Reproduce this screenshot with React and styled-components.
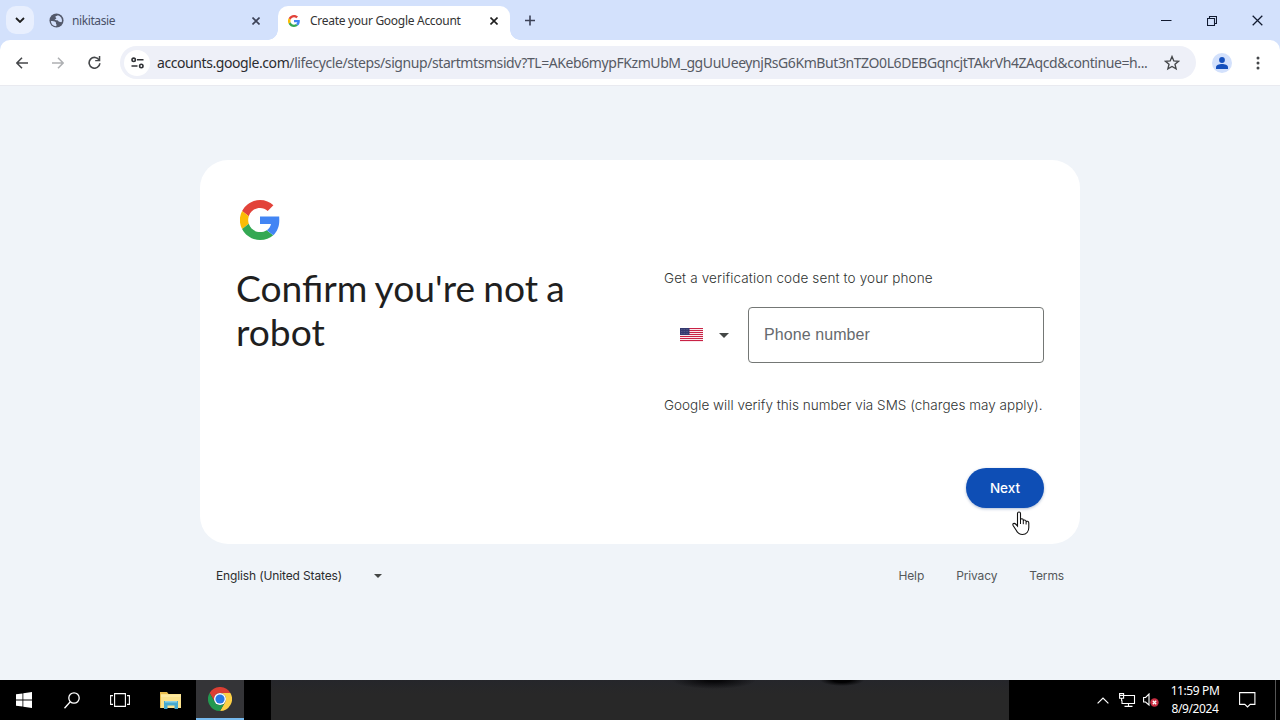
import styled, { createGlobalStyle, css } from 'styled-components';

const GlobalStyle = createGlobalStyle`
  * {
    box-sizing: border-box;
  }

  body {
    margin: 0;
    overflow: hidden;
    font-family: 'Noto Sans', 'Open Sans', sans-serif;
  }
`;

const GoogleLogo = ({ size }) => (
  <svg width={size} height={size} viewBox='4 4 40 40'>
    <path
      fill='#e2433a'
      d='M24 11.9c3 0 5.6 1 7.7 3l5.7-5.7C33.900 6 29.300 4 24 4 16.200 4 9.400 8.500 6.100 15l6.700 5.200c1.600-4.800 6-8.300 11.200-8.300z'
    />
    <path
      fill='#fbbc05'
      d='M12.800 27.800a12 12 0 0 1 0-7.600L6.100 15a20 20 0 0 0 0 18z'
    />
    <path
      fill='#34a853'
      d='M24 44c5.400 0 9.900-1.800 13.200-4.800l-6.500-5c-1.800 1.200-4.100 1.900-6.700 1.900-5.200 0-9.600-3.500-11.200-8.300L6.100 33C9.400 39.500 16.200 44 24 44z'
    />
    <path
      fill='#4285f4'
      d='M43.200 20.400H24v7.700h11c-.5 2.600-1.900 4.700-4.200 6.200l6.500 5c3.800-3.500 6-8.700 6-14.800 0-1.400-.1-2.800-.1-4.100z'
    />
  </svg>
);

const Cross = ({ size = 8, color = '#1f1f1f', width = 1.6 }) => (
  <svg width={size} height={size} viewBox='0 0 8 8'>
    <path d='M.5.5l7 7m0-7l-7 7' stroke={color} strokeWidth={width} />
  </svg>
);

const Caret = ({ width = 10, color = '#444746' }) => (
  <svg width={width} height={width / 2} viewBox='0 0 10 5'>
    <path d='M0 0h10L5 5z' fill={color} />
  </svg>
);

const UsFlag = () => (
  <svg width='23' height='14' viewBox='0 0 23 14'>
    <rect width='23' height='13' fill='#fff' />
    {[0, 1, 2, 3, 4, 5, 6].map((i) => (
      <rect key={i} y={i * 2} width='23' height='1.100' fill='#c92245' />
    ))}
    <rect width='9.500' height='7' fill='#34396f' />
    <path
      d='M1 1.500h8M1 3.500h8M1 5.500h8'
      stroke='#6f74a0'
      strokeWidth='.6'
      strokeDasharray='.8 .8'
    />
  </svg>
);

const TabStrip = () => (
  <Strip>
    <TabSearch>
      <svg width='10' height='6' viewBox='0 0 10 6'>
        <path d='M1 1l4 4 4-4' fill='none' stroke='#1f1f1f' strokeWidth='1.8' />
      </svg>
    </TabSearch>
    <Tab $width='232px'>
      <svg width='15' height='15' viewBox='0 0 16 16'>
        <circle cx='8' cy='8' r='7.500' fill='#53596b' />
        <path
          d='M2 8.500c2 0 4 .2 5 1.200s0 1.600.8 2.200c.6.600.2 1.600-.3 2.100A6 6 0 0 1 2 8.500zM9.500 2.300c-1 .7-2.500.7-2.700 1.700-.1 1 .9.700 1 1.500.1.900-1.600.5-1.700 1.500 0 .8 1.700.6 2.700.6 1.200 0 1 1.600 2.200 1.700 1 .1 1.600.700 2.600.400A6 6 0 0 0 9.500 2.300z'
          fill='#d3e0fb'
        />
      </svg>
      <TabTitle $gap='8px' $spacing='-0.4px'>
        nikitasie
      </TabTitle>
      <Cross color='#3c4257' />
    </Tab>
    <Tab $active $width='232px'>
      <GoogleLogo size={12} />
      <TabTitle $gap='10px' $spacing='-0.29px'>
        Create your Google Account
      </TabTitle>
      <Cross />
    </Tab>
    <NewTab>
      <svg width='10' height='11' viewBox='0 0 10 11'>
        <path d='M5 .500v10M0 5.500h10' stroke='#3c4257' strokeWidth='1.6' />
      </svg>
    </NewTab>
    <WindowControls>
      <svg width='11' height='11' viewBox='0 0 11 11'>
        <path d='M0 5.500h10.500' stroke='#111a30' />
      </svg>
      <svg width='10' height='10' viewBox='0 0 10 10'>
        <path
          d='M.5 2.500h7v7h-7zM2.500 2.500v-2h7v7h-2'
          fill='none'
          stroke='#111a30'
          strokeWidth='1.100'
        />
      </svg>
      <Cross size={11} color='#111a30' width={0.9} />
    </WindowControls>
  </Strip>
);

const Toolbar = () => (
  <ToolbarRow>
    <NavButtons>
      <svg width='12' height='12' viewBox='0 0 12 12'>
        <path
          d='M6 .7L.9 6 6 11.300M1 6h11'
          fill='none'
          stroke='#45474a'
          strokeWidth='1.500'
        />
      </svg>
      <svg width='12' height='12' viewBox='0 0 12 12'>
        <path
          d='M6 .7L11.100 6 6 11.300M11 6H0'
          fill='none'
          stroke='#aeb0b3'
          strokeWidth='1.500'
        />
      </svg>
      <svg width='13' height='13' viewBox='0 0 13 13'>
        <path
          d='M11.300 4.300A5.400 5.400 0 1 0 11.900 7.200'
          fill='none'
          stroke='#45474a'
          strokeWidth='1.600'
        />
        <path d='M12.300 0v5.300H7.200V3.900h3.600V0z' fill='#45474a' />
      </svg>
    </NavButtons>
    <Omnibox>
      <SiteInfo>
        <svg width='13' height='12' viewBox='0 0 13 12'>
          <g fill='none' stroke='#303236' strokeWidth='1.600'>
            <circle cx='2.700' cy='2.800' r='1.700' />
            <path d='M6 2.800h6.500M.5 9h6' />
            <circle cx='10.300' cy='9' r='1.700' />
          </g>
        </svg>
      </SiteInfo>
      <Url>
        <b>accounts.google.com</b>
        /lifecycle/steps/signup/startmtsmsidv?TL=AKeb6mypFKzmUbM_ggUuUeeynjRsG6KmBut3nTZO0L6DEBGqncjtTAkrVh4ZAqcd&amp;continue=h...
      </Url>
      <svg width='16' height='16' viewBox='0 0 16 16'>
        <path
          d='M8 1.600l1.800 4.300 4.700.4-3.500 3 1.100 4.600L8 11.500l-4.100 2.400L5 9.300l-3.500-3 4.700-.4z'
          fill='none'
          stroke='#45474a'
          strokeWidth='1.400'
        />
      </svg>
    </Omnibox>
    <Avatar>
      <svg width='12' height='12' viewBox='0 0 12 12' fill='#1550bd'>
        <circle cx='6' cy='3' r='2.900' />
        <path d='M0 12v-1.800C0 8 3.200 7 6 7s6 1 6 3.200V12z' />
      </svg>
    </Avatar>
    <svg width='4' height='14' viewBox='0 0 4 14' fill='#45474a'>
      <circle cx='2' cy='2' r='1.500' />
      <circle cx='2' cy='7' r='1.500' />
      <circle cx='2' cy='12' r='1.500' />
    </svg>
  </ToolbarRow>
);

const SignupCard = () => (
  <Card>
    <GoogleLogo size={40} />
    <Columns>
      <Heading>Confirm you&apos;re not a robot</Heading>
      <Form>
        <Hint $spacing='0.13px'>Get a verification code sent to your phone</Hint>
        <PhoneRow>
          <Country>
            <UsFlag />
            <Caret />
          </Country>
          <PhoneField>Phone number</PhoneField>
        </PhoneRow>
        <Hint $spacing='0.02px'>
          Google will verify this number via SMS (charges may apply).
        </Hint>
      </Form>
    </Columns>
    <Actions>
      <NextButton>
        Next
        <Pointer width='18' height='25' viewBox='0 0 18 25'>
          <path
            d='M5.500 15V2.500c0-2 3-2 3 0V9c0-1.800 2.800-1.700 2.800.2V10c.2-1.500 2.800-1.300 2.800.5v.5c.4-1.300 2.700-1 2.700 1v4.500c0 4-2.300 7-6.300 7-3.500 0-5-1.700-6.300-4.200L1.100 14.500c-.9-1.900 1.200-2.800 2.500-1.500z'
            fill='#fff'
            stroke='#111'
            strokeWidth='1.100'
          />
          <path d='M8.500 8.500V13M11.300 10v3.200M14.100 11v2.500' stroke='#111' />
        </Pointer>
      </NextButton>
    </Actions>
  </Card>
);

const Taskbar = () => (
  <Bar>
    <TaskButton>
      <svg width='16' height='16' viewBox='0 0 16 16' fill='#fff'>
        <path d='M0 2.300L6.500 1.400v6.200H0zM7.300 1.300L16 0v7.600H7.300zM0 8.400h6.500v6.200L0 13.700zM7.300 8.400H16V16l-8.700-1.300z' />
      </svg>
    </TaskButton>
    <TaskButton>
      <svg width='16' height='17' viewBox='0 0 16 17'>
        <g fill='none' stroke='#fff' strokeWidth='1.300'>
          <circle cx='10' cy='6' r='5.200' />
          <path d='M6.300 9.800L.5 16.200' />
        </g>
      </svg>
    </TaskButton>
    <TaskButton>
      <svg width='20' height='14' viewBox='0 0 20 14'>
        <path
          d='M4.600.6h10.800v12.800H4.600zM3 2.600H.6v8.800H3M17 2.600h2.400v8.800H17'
          fill='none'
          stroke='#fff'
          strokeWidth='1.100'
        />
      </svg>
    </TaskButton>
    <TaskButton $wide>
      <svg width='22' height='19' viewBox='0 0 22 19'>
        <path d='M0 1h7l1.500 2H21v14H0z' fill='#e9bd4c' />
        <path d='M1 3h20v14H1z' fill='#fbe28c' />
        <path d='M1 4.500h20v1H1z' fill='#fff0b5' />
        <path d='M4 10h14v8h-3.500v-3.500h-7V18H4z' fill='#45a9cf' />
        <path d='M5 10h12v1.500H5z' fill='#8bd0e5' />
      </svg>
    </TaskButton>
    <TaskButton $open>
      <svg width='24' height='24' viewBox='0 0 24 24'>
        <path d='M1.600 6A12 12 0 0 1 22.400 6H12a6 6 0 0 0-5.200 9z' fill='#db3f34' />
        <path d='M22.400 6A12 12 0 0 1 12 24l5.200-9A6 6 0 0 0 12 6z' fill='#fdd046' />
        <path d='M12 24A12 12 0 0 1 1.600 6l5.200 9a6 6 0 0 0 10.400 0z' fill='#239850' />
        <circle cx='12' cy='12' r='6' fill='#fff' />
        <circle cx='12' cy='12' r='4.600' fill='#2878e6' />
      </svg>
    </TaskButton>
    <Overlay />
    <Tray>
      <svg width='12' height='7' viewBox='0 0 12 7'>
        <path d='M.6 6.400L6 1l5.400 5.400' fill='none' stroke='#fff' strokeWidth='1.200' />
      </svg>
      <svg width='17' height='14' viewBox='0 0 17 14'>
        <g fill='none' stroke='#fff' strokeWidth='1.100'>
          <path d='M5 2.500h10.500v8H3V7.500M9.500 10.500v3M5.500 13.400h8' />
          <path d='M.6.600h4v4.700h-4zM.6 2.500h4M2.600 5.500V8' />
        </g>
      </svg>
      <svg width='16' height='14' viewBox='0 0 16 14'>
        <path
          d='M.6 4.500h2L6 1v11L2.600 9h-2z'
          fill='none'
          stroke='#fff'
          strokeWidth='1.100'
        />
        <circle cx='11.500' cy='9.500' r='4.200' fill='#c92e42' />
        <path d='M9.800 7.800l3.400 3.400m0-3.400l-3.400 3.400' stroke='#fff' strokeWidth='1.300' />
      </svg>
    </Tray>
    <Clock>
      <span>11:59 PM</span>
      <span>8/9/2024</span>
    </Clock>
    <Notifications>
      <svg width='17' height='16' viewBox='0 0 17 16'>
        <path
          d='M.6.600h15.300v11.800h-4.700L8.500 15l-2.700-2.600H.6z'
          fill='none'
          stroke='#fff'
          strokeWidth='1.100'
        />
      </svg>
    </Notifications>
  </Bar>
);

export default function App() {
  return (
    <Screen>
      <GlobalStyle />
      <TabStrip />
      <Toolbar />
      <Page>
        <SignupCard />
        <Footer>
          <Language>
            English (United States)
            <Caret width={8} />
          </Language>
          <Links>
            <span>Help</span>
            <span>Privacy</span>
            <span>Terms</span>
          </Links>
        </Footer>
      </Page>
      <Taskbar />
    </Screen>
  );
}

const Screen = styled.div`
  display: flex;
  flex-direction: column;
  width: 1280px;
  height: 720px;
  background: #d3e1fc;

  svg {
    display: block;
    flex: none;
  }
`;

const Strip = styled.header`
  display: flex;
  align-items: flex-end;
  height: 40px;
  padding-left: 6px;
`;

const TabSearch = styled.div`
  display: flex;
  align-items: center;
  justify-content: center;
  width: 28px;
  height: 28px;
  margin: 0 6px 6px 0;
  border-radius: 10px;
  background: #e8effe;
`;

const Tab = styled.div`
  position: relative;
  display: flex;
  align-items: center;
  width: ${({ $width }) => $width};
  height: 34px;
  padding: 0 12px 5px 9px;
  color: #4a5168;

  & + & {
    margin-left: 6px;
  }

  ${({ $active }) =>
    $active &&
    css`
      padding-left: 10px;
      border-radius: 10px 10px 0 0;
      background: #fff;
      color: #333;

      &::before,
      &::after {
        content: '';
        position: absolute;
        bottom: 0;
        width: 10px;
        height: 10px;
      }

      &::before {
        right: 100%;
        background: radial-gradient(circle at 0 0, transparent 9.5px, #fff 10px);
      }

      &::after {
        left: 100%;
        background: radial-gradient(
          circle at 100% 0,
          transparent 9.5px,
          #fff 10px
        );
      }
    `}
`;

const TabTitle = styled.span`
  flex: 1;
  margin-left: ${({ $gap }) => $gap};
  font-size: 12px;
  letter-spacing: ${({ $spacing }) => $spacing};
  white-space: nowrap;
`;

const NewTab = styled.div`
  margin: 0 0 14px 15px;
`;

const WindowControls = styled.div`
  display: flex;
  align-items: center;
  gap: 35px;
  margin: 0 17px 14px auto;
`;

const ToolbarRow = styled.div`
  display: flex;
  align-items: center;
  height: 46px;
  padding: 0 20px 0 16px;
  border-bottom: 1px solid #e9eaf0;
  border-radius: 10px 10px 0 0;
  background: #fff;
`;

const NavButtons = styled.nav`
  display: flex;
  align-items: center;
  gap: 24px;
  width: 104px;
`;

const Omnibox = styled.div`
  display: flex;
  align-items: center;
  width: 1076px;
  height: 33px;
  padding: 0 16px 0 4px;
  border-radius: 17px;
  background: #eef0f8;
`;

const SiteInfo = styled.div`
  display: flex;
  align-items: center;
  justify-content: center;
  width: 26px;
  height: 26px;
  border-radius: 50%;
  background: #fff;
`;

const Url = styled.span`
  flex: 1;
  margin-left: 7px;
  color: #565a64;
  font-size: 14px;
  letter-spacing: -0.418px;
  white-space: nowrap;

  b {
    color: #2b2c2f;
    font-weight: 400;
  }
`;

const Avatar = styled.div`
  display: flex;
  align-items: center;
  justify-content: center;
  width: 20px;
  height: 20px;
  margin: 0 auto 0 16px;
  border-radius: 50%;
  background: #d3e1fc;
`;

const Page = styled.main`
  display: flex;
  flex: 1;
  flex-direction: column;
  align-items: center;
  padding-top: 74px;
  background: #f0f4f9;
`;

const Card = styled.section`
  display: flex;
  flex-direction: column;
  width: 880px;
  height: 384px;
  padding: 40px 36px 36px;
  border-radius: 28px;
  background: #fff;

  > svg {
    margin-left: 4px;
  }
`;

const Columns = styled.div`
  display: grid;
  grid-template-columns: 380px 380px;
  gap: 48px;
  margin-top: 26px;
`;

const Heading = styled.h1`
  margin: 0;
  color: #1f1f1f;
  font: 400 37.2px/44px Lato, sans-serif;
  word-spacing: -1.4px;
`;

const Form = styled.div`
  display: flex;
  flex-direction: column;
  padding-top: 2px;
`;

const Hint = styled.p`
  margin: 0;
  color: #303332;
  font: 300 13.5px/21px Inter, sans-serif;
  letter-spacing: ${({ $spacing }) => $spacing};
  white-space: nowrap;
`;

const PhoneRow = styled.div`
  display: flex;
  margin: 18px 0 32px;
`;

const Country = styled.div`
  display: flex;
  align-items: center;
  gap: 16px;
  width: 84px;
  padding-left: 16px;
`;

const PhoneField = styled.div`
  display: flex;
  align-items: center;
  flex: 1;
  height: 56px;
  padding: 0 15px;
  border: 1px solid #747775;
  border-radius: 4px;
  color: #666a6e;
  font: 400 16px 'Liberation Sans', sans-serif;
  letter-spacing: 0.08px;
`;

const Actions = styled.div`
  display: flex;
  justify-content: flex-end;
  margin-top: auto;
`;

const NextButton = styled.div`
  position: relative;
  display: flex;
  align-items: center;
  justify-content: center;
  width: 78px;
  height: 40px;
  border-radius: 20px;
  background: #0e4eb5;
  box-shadow: 0 1px 3px rgba(20, 60, 130, 0.35);
  color: #fff;
  font: 500 13.5px Inter, sans-serif;
`;

const Pointer = styled.svg`
  position: absolute;
  top: 43px;
  left: 46px;
`;

const Footer = styled.footer`
  display: flex;
  align-items: center;
  justify-content: space-between;
  width: 848px;
  margin-top: 24px;
  color: #555859;
  font: 400 12px/16px Inter, sans-serif;
  letter-spacing: -0.13px;
`;

const Language = styled.div`
  display: flex;
  align-items: center;
  justify-content: space-between;
  width: 166px;
  color: #2b2c2d;
  white-space: nowrap;
`;

const Links = styled.div`
  display: flex;
  gap: 32px;
`;

const Bar = styled.footer`
  display: flex;
  height: 40px;
  background: #000;

  > * {
    flex: none;
  }
`;

const TaskButton = styled.div`
  display: flex;
  align-items: center;
  justify-content: center;
  width: ${({ $wide }) => ($wide ? '52px' : '48px')};
  padding-left: ${({ $wide }) => ($wide ? '2px' : 0)};
  border-bottom: ${({ $open }) => ($open ? '2px solid #76b9ed' : 'none')};
  background: ${({ $open }) => ($open ? '#343437' : 'none')};
`;

const Overlay = styled.div`
  width: 738px;
  margin-left: 27px;
  background:
    radial-gradient(ellipse 42px 9px at 443px 0, #08080a 20%, transparent),
    radial-gradient(ellipse 22px 6px at 571px 0, #020203 40%, transparent),
    linear-gradient(#25262b, #282828 14px);
`;

const Tray = styled.div`
  display: flex;
  align-items: center;
  gap: 10px;
  margin-left: 88px;

  > :last-child {
    margin-left: -3px;
  }
`;

const Clock = styled.div`
  display: flex;
  flex-direction: column;
  align-items: center;
  width: 72px;
  padding-top: 2px;
  color: #fff;
  font-size: 12px;
  line-height: 18px;
  letter-spacing: -0.4px;
`;

const Notifications = styled.div`
  display: flex;
  align-items: center;
  width: 45px;
  margin-left: auto;
  margin-right: 4px;
  padding-left: 8px;
  border-right: 1px solid #555;
`;
